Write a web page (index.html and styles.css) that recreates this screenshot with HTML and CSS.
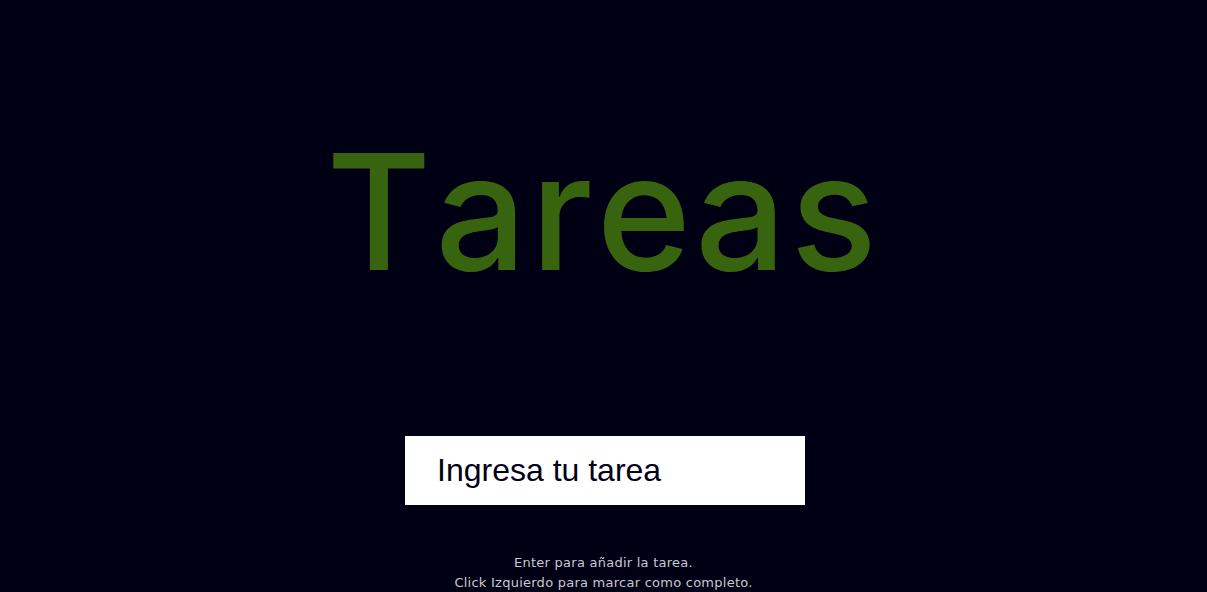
FILE: index.html
```html
<!DOCTYPE html>
<html lang="es">
<head>
<meta charset="utf-8">
<title>Tareas</title>
<link rel="stylesheet" href="styles.css">
</head>
<body>
<main class="app">
  <h1 class="title">Tareas</h1>
  <form class="task-form" onsubmit="return false">
    <input class="task-input" type="text" placeholder="Ingresa tu tarea">
  </form>
  <ul class="task-list"></ul>
  <p class="hint">Enter para añadir la tarea.<br>Click Izquierdo para marcar como completo.</p>
</main>
</body>
</html>
```
FILE: styles.css
```css
html, body {
  margin: 0;
  padding: 0;
  height: 100%;
}
body {
  background: #000014;
  font-family: "DejaVu Sans", "Noto Sans", sans-serif;
  overflow: hidden;
}
.app {
  display: flex;
  flex-direction: column;
  align-items: center;
  padding-top: 131px;
}
.title {
  margin: 0;
  font-family: "Inter", sans-serif;
  font-weight: 550;
  font-size: 161px;
  line-height: 1;
  letter-spacing: 3.8px;
  color: #38640f;
  font-kerning: none;
}
.task-form {
  margin-top: 144px;
  margin-left: 3px;
}
.task-input {
  box-sizing: border-box;
  display: block;
  width: 400px;
  height: 69px;
  border: none;
  outline: none;
  padding: 0 32px;
  background: #ffffff;
  font-family: "Liberation Sans", Arial, sans-serif;
  font-size: 32px;
  color: #000014;
}
.task-input::placeholder {
  color: #000014;
  opacity: 1;
}
.task-list {
  margin: 0;
  padding: 0;
  list-style: none;
}
.hint {
  margin: 48px 0 0;
  font-family: "DejaVu Sans", sans-serif;
  font-size: 13px;
  line-height: 20px;
  letter-spacing: 0.25px;
  color: #c8c8d0;
  text-align: center;
}
```
